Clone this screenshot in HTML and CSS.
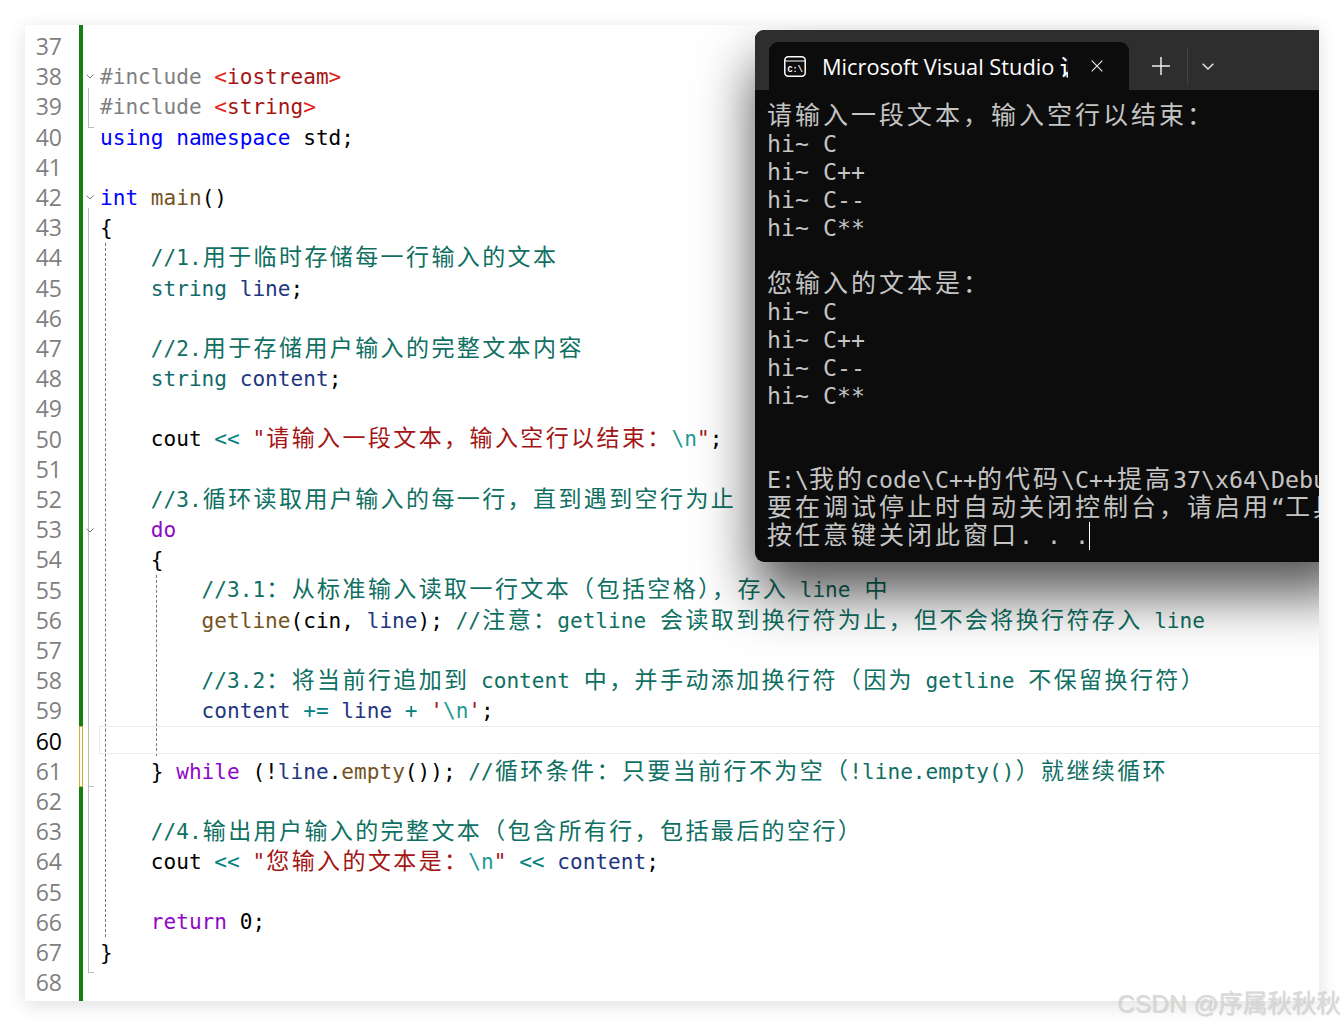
FILE: index.html
```html
<!DOCTYPE html>
<html lang="zh">
<head>
<meta charset="utf-8">
<title>Console program in Visual Studio</title>
<link rel="stylesheet" href="styles.css">
</head>
<body>
<main class="card">
  <div class="gutter">
    <div>37</div><div>38</div><div>39</div><div>40</div><div>41</div><div>42</div><div>43</div><div>44</div>
    <div>45</div><div>46</div><div>47</div><div>48</div><div>49</div><div>50</div><div>51</div><div>52</div>
    <div>53</div><div>54</div><div>55</div><div>56</div><div>57</div><div>58</div><div>59</div>
    <div class="now">60</div>
    <div>61</div><div>62</div><div>63</div><div>64</div><div>65</div><div>66</div><div>67</div><div>68</div>
  </div>
  <div class="bar"><span class="bar-edit"></span></div>
  <div class="fold">
    <span class="fline f1"></span><span class="fline f2"></span><span class="fline f3"></span>
    <svg class="chev c1" viewBox="0 0 8 5"><path d="M.5.5 4 4 7.5.5" fill="none" stroke="#777"/></svg>
    <svg class="chev c2" viewBox="0 0 8 5"><path d="M.5.5 4 4 7.5.5" fill="none" stroke="#777"/></svg>
    <svg class="chev c3" viewBox="0 0 8 5"><path d="M.5.5 4 4 7.5.5" fill="none" stroke="#777"/></svg>
  </div>
  <div class="code">
    <span class="guide g1"></span><span class="guide g2"></span><span class="curline"></span>
    <div class="l"> </div>
    <div class="l"><i class="g">#include </i><i class="r">&lt;</i><i class="s">iostream</i><i class="r">&gt;</i></div>
    <div class="l"><i class="g">#include </i><i class="r">&lt;</i><i class="s">string</i><i class="r">&gt;</i></div>
    <div class="l"><i class="k">using namespace</i> std;</div>
    <div class="l"> </div>
    <div class="l"><i class="k">int</i> <i class="f">main</i>()</div>
    <div class="l">{</div>
    <div class="l c">    //1.<b>用于临时存储每一行输入的文本</b></div>
    <div class="l">    <i class="t">string</i> <i class="v">line</i>;</div>
    <div class="l"> </div>
    <div class="l c">    //2.<b>用于存储用户输入的完整文本内容</b></div>
    <div class="l">    <i class="t">string</i> <i class="v">content</i>;</div>
    <div class="l"> </div>
    <div class="l">    cout <i class="o">&lt;&lt;</i> <i class="s">"<b>请输入一段文本，输入空行以结束：</b></i><i class="e">\n</i><i class="s">"</i>;</div>
    <div class="l"> </div>
    <div class="l c">    //3.<b>循环读取用户输入的每一行，直到遇到空行为止</b></div>
    <div class="l">    <i class="p">do</i></div>
    <div class="l">    {</div>
    <div class="l c">        //3.1<b>：从标准输入读取一行文本（包括空格），存入</b> line <b>中</b></div>
    <div class="l">        <i class="f">getline</i>(cin, <i class="v">line</i>); <i class="cc">//<b>注意：</b>getline <b>会读取到换行符为止，但不会将换行符存入</b> line</i></div>
    <div class="l"> </div>
    <div class="l c">        //3.2<b>：将当前行追加到</b> content <b>中，并手动添加换行符（因为</b> getline <b>不保留换行符）</b></div>
    <div class="l">        <i class="v">content</i> <i class="o">+=</i> <i class="v">line</i> <i class="o">+</i> <i class="s">'</i><i class="e">\n</i><i class="s">'</i>;</div>
    <div class="l"> </div>
    <div class="l">    } <i class="p">while</i> (!<i class="v">line</i>.<i class="f">empty</i>()); <i class="cc">//<b>循环条件：只要当前行不为空（</b>!line.empty()<b>）就继续循环</b></i></div>
    <div class="l"> </div>
    <div class="l c">    //4.<b>输出用户输入的完整文本（包含所有行，包括最后的空行）</b></div>
    <div class="l">    cout <i class="o">&lt;&lt;</i> <i class="s">"<b>您输入的文本是：</b></i><i class="e">\n</i><i class="s">"</i> <i class="o">&lt;&lt;</i> <i class="v">content</i>;</div>
    <div class="l"> </div>
    <div class="l">    <i class="p">return</i> 0;</div>
    <div class="l">}</div>
    <div class="l"> </div>
  </div>

  <section class="term">
    <header class="term-bar">
      <div class="tab">
        <svg class="tab-icon" viewBox="0 0 22 21"><rect x=".8" y=".8" width="20.4" height="19.4" rx="3.5" fill="none" stroke="#fff" stroke-width="1.5"/><path d="M1 5h20" stroke="#fff" stroke-width="1.2"/><text x="3.5" y="15.5" class="tab-icon-text">C:\</text></svg>
        <span class="tab-title">Microsoft Visual Studio 调试控制台</span>
        <svg class="tab-x" viewBox="0 0 12 12"><path d="M.7.7l10.6 10.6M11.3.7.7 11.3" stroke="#eee" stroke-width="1.1"/></svg>
      </div>
      <div class="tab-actions">
        <svg class="plus" viewBox="0 0 18 18"><path d="M9 0v18M0 9h18" stroke="#eee" stroke-width="1.5"/></svg>
        <span class="sep"></span>
        <svg class="more" viewBox="0 0 12 7"><path d="M.7.7 6 6l5.3-5.3" fill="none" stroke="#eee" stroke-width="1.3"/></svg>
      </div>
    </header>
    <div class="term-body">
      <div class="tl"><b>请输入一段文本，输入空行以结束：</b></div>
      <div class="tl">hi~ C</div>
      <div class="tl">hi~ C++</div>
      <div class="tl">hi~ C--</div>
      <div class="tl">hi~ C**</div>
      <div class="tl"> </div>
      <div class="tl"><b>您输入的文本是：</b></div>
      <div class="tl">hi~ C</div>
      <div class="tl">hi~ C++</div>
      <div class="tl">hi~ C--</div>
      <div class="tl">hi~ C**</div>
      <div class="tl"> </div>
      <div class="tl"> </div>
      <div class="tl">E:\<b>我的</b>code\C++<b>的代码</b>\C++<b>提高</b>37\x64\Debug\demo.exe</div>
      <div class="tl"><b>要在调试停止时自动关闭控制台，请启用</b>“<b>工具</b>”</div>
      <div class="tl"><b>按任意键关闭此窗口</b>. . .<span class="cursor"></span></div>
    </div>
  </section>
</main>
<div class="mark">CSDN @<b>序属秋秋秋</b></div>
</body>
</html>
```
FILE: styles.css
```css
html, body {
  margin: 0;
  width: 1344px;
  height: 1026px;
  overflow: hidden;
  background: #fff;
}
body {
  position: relative;
  padding: 25px;
  box-sizing: border-box;
}
.card {
  position: relative;
  display: flex;
  width: 1294px;
  height: 976px;
  padding-top: 7px;
  box-sizing: border-box;
  background: #fff;
  overflow: hidden;
}
body::before {
  content: "";
  position: absolute;
  left: 25px;
  top: 25px;
  width: 1294px;
  height: 976px;
  box-shadow: 0 4px 18px rgba(0, 0, 0, .13);
}
.gutter {
  width: 37px;
  margin-top: -1px;
  margin-right: 17px;
  text-align: right;
  font: 23px/30.2px "Open Sans", sans-serif;
  color: #7f7f7f;
}
.gutter .now { color: #000; }
.bar {
  position: relative;
  width: 4px;
  margin-top: -7px;
  background: #187d13;
}
.bar-edit {
  position: absolute;
  left: 0;
  top: 701px;
  width: 4px;
  height: 61px;
  box-sizing: border-box;
  border: 1px solid #d2b032;
  background: #fffef0;
}
.fold {
  position: relative;
  width: 17px;
}
.fline {
  position: absolute;
  left: 5px;
  width: 5px;
  border-left: 1px solid #bbb;
  border-bottom: 1px solid #bbb;
}
.f1 { top: 56px; height: 39px; }
.f2 { top: 176px; height: 591px; border-bottom: 0; }
.f3 { top: 504px; height: 250px; }
.f2::after {
  content: "";
  position: absolute;
  left: -1px;
  bottom: -174px;
  width: 5px;
  height: 174px;
  border-left: 1px solid #bbb;
  border-bottom: 1px solid #bbb;
}
.chev {
  position: absolute;
  left: 3px;
  width: 8px;
  height: 5px;
}
.c1 { top: 42px; }
.c2 { top: 163px; }
.c3 { top: 496px; }
.code {
  position: relative;
  flex: 1;
  font: 21.1px/30.2px "DejaVu Sans Mono", monospace;
  color: #000;
}
.l {
  height: 30.2px;
  white-space: pre;
}
.code i { font-style: normal; }
.code b, .term b, .mark b {
  font-family: "Noto Sans CJK SC", sans-serif;
  font-weight: 400;
  line-height: 0;
}
.code b {
  font-size: 23px;
  letter-spacing: 2.4px;
  margin: 0 -1.2px 0 1.2px;
}
.g { color: #7f7f7f; }
.r { color: #e2231a; }
.s { color: #a31515; }
.k { color: #0000ff; }
.f { color: #74531f; }
.t { color: #126b6b; }
.v { color: #1f377f; }
.o { color: #008080; }
.e { color: #1e9a96; }
.p { color: #8f08c4; }
.c, .cc { color: #0f6f62; }
.guide {
  position: absolute;
  width: 0;
  border-left: 1px dashed #777;
}
.g1 { left: 5px; top: 211px; height: 694px; }
.g2 { left: 56px; top: 543px; height: 181px; }
.curline {
  position: absolute;
  left: -1px;
  right: 0;
  top: 694px;
  height: 26px;
  border: 1px solid #eaeaf2;
  border-right: 0;
}
.term {
  position: absolute;
  left: 730px;
  top: 5px;
  width: 600px;
  height: 532px;
  border-radius: 9px;
  overflow: hidden;
  background: #0c0c0c;
  z-index: 1;
}
.card::after {
  content: "";
  position: absolute;
  left: 730px;
  top: 5px;
  width: 600px;
  height: 532px;
  border-radius: 9px;
  box-shadow: 0 32px 56px rgba(0, 0, 0, .68);
}
.term-bar {
  display: flex;
  align-items: flex-end;
  height: 60px;
  padding-left: 14px;
  box-sizing: border-box;
  background: #2e2e2e;
}
.tab {
  display: flex;
  align-items: center;
  width: 360px;
  height: 48px;
  box-sizing: border-box;
  padding-left: 15px;
  border-radius: 9px 9px 0 0;
  background: #0c0c0c;
}
.tab-actions {
  display: flex;
  align-items: center;
  height: 48px;
}
.tab-icon { width: 22px; height: 21px; }
.tab-icon-text {
  font: 700 8.5px "Liberation Mono", monospace;
  fill: #fff;
}
.tab-title {
  width: 246px;
  margin: -2px 0 0 16px;
  overflow: hidden;
  white-space: nowrap;
  font: 500 21.8px "Open Sans", "Noto Sans CJK SC", sans-serif;
  color: #fff;
}
.tab-x {
  width: 12px;
  height: 12px;
  margin-left: 23px;
}
.plus {
  width: 18px;
  height: 18px;
  margin-left: 23px;
}
.sep {
  width: 1px;
  height: 36px;
  margin-left: 17px;
  background: #444;
}
.more {
  width: 12px;
  height: 7px;
  margin-left: 14px;
}
.term-body {
  padding: 12px 0 0 12px;
  font: 23.25px/28px "DejaVu Sans Mono", monospace;
  color: #c4c4c4;
}
.tl {
  height: 28px;
  white-space: pre;
}
.term b {
  font-size: 25px;
  letter-spacing: 3px;
}
.cursor {
  display: inline-block;
  width: 1px;
  height: 28px;
  vertical-align: -6px;
  background: #fff;
}
.mark {
  position: absolute;
  left: 1117px;
  top: 990px;
  white-space: nowrap;
  font: 24.5px "Liberation Sans", sans-serif;
  color: #d9d9d9;
  text-shadow: 1px 1px 1px rgba(0, 0, 0, .15);
}
```
